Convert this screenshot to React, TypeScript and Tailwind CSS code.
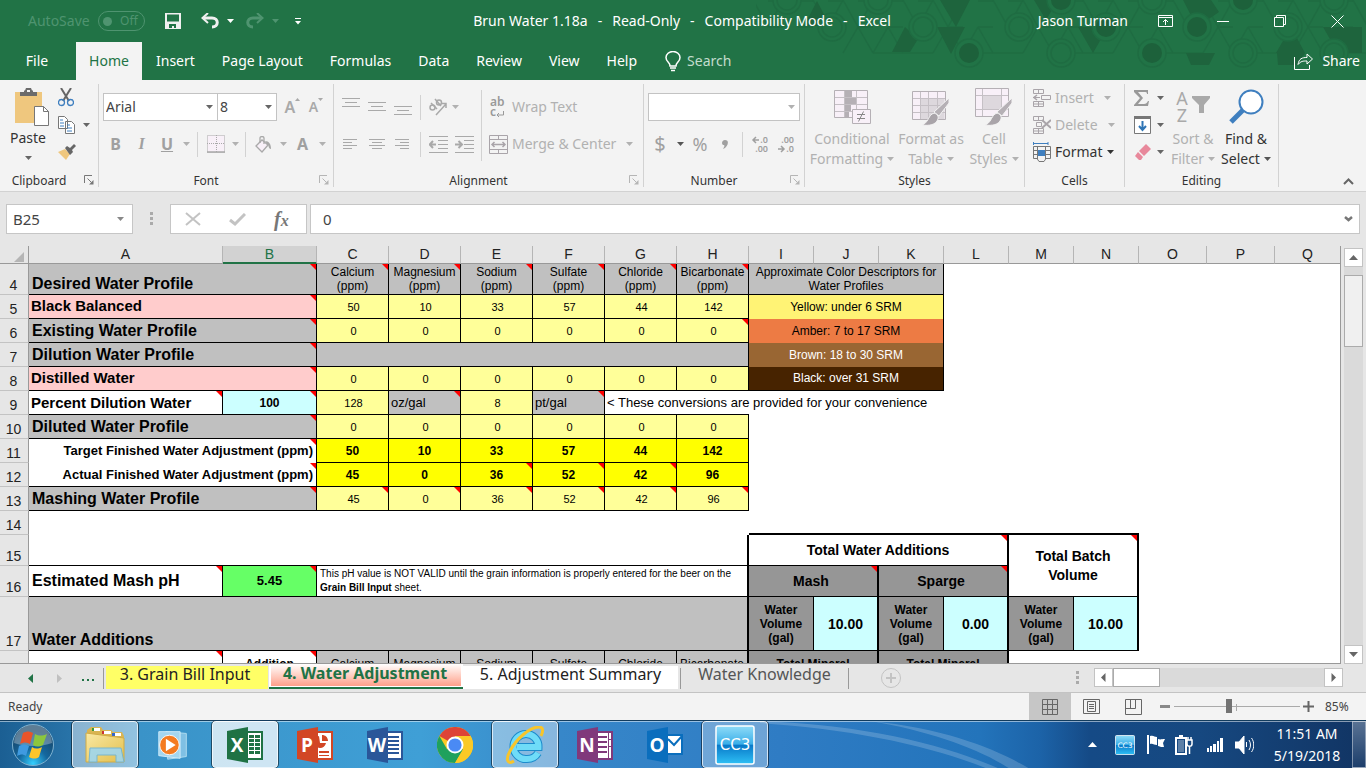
import React, { useState } from 'react';
import clsx from 'clsx';

const RIBBON_TABS = ['Insert', 'Page Layout', 'Formulas', 'Data', 'Review', 'View', 'Help'];
const COLUMNS = ['A', 'B', 'C', 'D', 'E', 'F', 'G', 'H', 'I', 'J', 'K', 'L', 'M', 'N', 'O', 'P', 'Q'];
const COLUMN_WIDTHS = [29, 194, 94, 72, 72, 72, 72, 72, 72, 65, 65, 65, 65, 65, 65, 68, 68];
const IONS = ['Calcium', 'Magnesium', 'Sodium', 'Sulfate', 'Chloride', 'Bicarbonate'];

/* ---------- small shared pieces ---------- */

const Caret = ({ className = 'text-[#666]' }: { className?: string }) => (
    <svg width="7" height="4" viewBox="0 0 7 4" className={clsx('shrink-0', className)}><path d="M0 0h7L3.500 4z" fill="currentColor" /></svg>
);

const Sep = ({ className = 'h-[25px]' }: { className?: string }) => <div className={clsx('w-px mx-1 shrink-0 bg-[#d2d2d2]', className)} />;

const IconButton = ({ label, className, children }: { label: string; className?: string; children: React.ReactNode }) => (
    <button type="button" aria-label={label} className={clsx('flex items-center justify-center shrink-0 h-6', className)}>{children}</button>
);

const Launcher = ({ className = 'text-[#b5b5b5]' }: { className?: string }) => (
    <svg width="10" height="10" viewBox="0 0 10 10" fill="none" stroke="currentColor" className={className}>
        <path d="M.5 8V.5H8M3.500 3.500l4 4" />
        <path d="M9.500 5v4.500H5z" fill="currentColor" stroke="none" />
    </svg>
);

const Group = ({ label, width, launcher, className, children }: { label: string; width: string; launcher?: string; className?: string; children: React.ReactNode }) => (
    <section aria-label={label} className={clsx('relative flex flex-col shrink-0 border-r border-[#d2d2d2] h-[103px]', width)}>
        <div className={clsx('flex shrink-0 h-[88px]', className)}>{children}</div>
        <div className={clsx('flex shrink-0 items-center justify-center h-[18px] text-xs text-[#333]', launcher && 'pr-5')}>{label}</div>
        {launcher && <button type="button" aria-label={`${label} settings`} className="absolute right-1 bottom-0.5"><Launcher className={launcher} /></button>}
    </section>
);

/* ---------- header ---------- */

// triangular lattice with circles on every third node
const HeaderPattern = () => {
    const lines: React.ReactNode[] = [];
    for (let i = 0; i < 22; i++) {
        const x = 12 + i * 30;
        if (i % 3 !== 1) lines.push(<path key={`a${i}`} d={`M${x} 27l15 -27M${x} 27l-15 -27`} />);
        if (i % 3 !== 2 && i > 1) lines.push(<path key={`b${i}`} d={`M${x} 27l15 26M${x} 27l-15 26`} />);
        if (i % 3 !== 0 && i > 2) lines.push(<path key={`c${i}`} d={`M${x - 15} 53h30`} />);
        lines.push(<path key={`d${i}`} d={`M${x} 27h15M${x} 1h15`} />);
    }
    const rings = [[31, 0], [76, 27], [122, 0], [167, 27], [263, 27], [305, 53], [487, 53], [396, 0], [532, 27], [578, 53], [578, 0]];
    const discs = [[213, 53], [305, 0], [350, 27], [396, 53], [441, 27], [487, 0]];
    return (
        <svg width="610" height="80" viewBox="0 0 610 80" className="absolute right-0 top-0" fill="none" stroke="#1f6c42" strokeWidth="1.500">
            {lines}
            <g fill="#1e643d" stroke="none">
                <path d="M61 1l13 25H48zM149 27l-13 25h18l8 -13zM181 27h28l-14 27zM184 0h30l-14 27zM322 27h30l-15 26zM278 0h24l-12 20zM427 0h28l8 12 -22 15zM520 53l15 -26 14 26zM567 27l15 26h24V27z" />
                <path d="M521 53h28l-7 12h-20zM430 53h29l-6 12h-18z" />
            </g>
            {rings.map(([x, y], i) => <g key={i}><circle cx={x} cy={y} r="14" fill="#217346" /><circle cx={x} cy={y} r="10" /></g>)}
            {discs.map(([x, y], i) => <g key={i}><circle cx={x} cy={y} r="14" fill="#217346" /><circle cx={x} cy={y} r="10" fill="#1d613b" stroke="none" /></g>)}
        </svg>
    );
};

const Header = () => (
    <header className="relative shrink-0 bg-[#217346] text-white text-sm">
        <HeaderPattern />
        <div className="relative flex items-center h-[42px]">
            <div className="flex items-center flex-1 pl-7 text-[#4f9470]">
                <span>AutoSave</span>
                <button type="button" aria-label="AutoSave off" className="flex items-center justify-between w-[47px] h-5 ml-2 pl-1 pr-1.5 border border-[#4f9470] rounded-full text-xs">
                    <span className="w-[9px] h-[9px] rounded-full bg-[#4f9470]" />Off
                </button>
                <button type="button" aria-label="Save" className="ml-5">
                    <svg width="16" height="16" viewBox="0 0 16 16"><path fill="#f0f0f0" fillRule="evenodd" d="M0 0h16v16H0zM2 1.500v7h12v-7zM4 11v4h3v-2h2v2h2v-4z" /></svg>
                </button>
                <button type="button" aria-label="Undo" className="flex items-center gap-2 ml-5 text-[#f0f0f0]">
                    <svg width="18" height="16" viewBox="0 0 18 16" fill="none" stroke="currentColor"><path d="M3 5h8c7 0 7 9 0 9" strokeWidth="3" /><path d="M7 0L1.500 5 7 10" strokeWidth="2" /></svg>
                    <Caret className="text-white" />
                </button>
                <button type="button" aria-label="Redo" className="flex items-center gap-2 ml-3">
                    <svg width="18" height="16" viewBox="0 0 18 16" fill="none" stroke="currentColor"><path d="M15 5H7c-7 0-7 9 0 9" strokeWidth="3" /><path d="M11 0l5.500 5L11 10" strokeWidth="2" /></svg>
                    <Caret className="text-[#4f9470]" />
                </button>
                <button type="button" aria-label="Customize toolbar" className="ml-4 text-white">
                    <svg width="6" height="7" viewBox="0 0 6 7" fill="currentColor"><path d="M0 0h6v1H0zM0 3h6L3 6.500z" /></svg>
                </button>
            </div>
            <h1 className="flex gap-2.5 pr-2 whitespace-nowrap shrink-0"><span>Brun Water 1.18a</span><span>-</span><span>Read-Only</span><span>-</span><span>Compatibility Mode</span><span>-</span><span>Excel</span></h1>
            <div className="flex items-center justify-end flex-1 pr-[22px]">
                <span>Jason Turman</span>
                <button type="button" aria-label="Ribbon display options" className="ml-[30px]">
                    <svg width="15" height="12" viewBox="0 0 15 12" fill="none" stroke="#fff"><path d="M.5 .5h14v11H.5zM.5 2.500h14M7.500 10V4.500M5 7l2.500-2.500L10 7" /></svg>
                </button>
                <button type="button" aria-label="Minimize" className="w-3 h-px ml-11 bg-white" />
                <button type="button" aria-label="Restore" className="ml-[45px]">
                    <svg width="12" height="12" viewBox="0 0 12 12" fill="none" stroke="#fff"><path d="M.5 2.500h9v9h-9zM2.500 2.500v-2h9v9h-2" /></svg>
                </button>
                <button type="button" aria-label="Close" className="ml-[45px]">
                    <svg width="13" height="13" viewBox="0 0 13 13" stroke="#fff"><path d="M.5 .5l12 12M12.500 .5l-12 12" /></svg>
                </button>
            </div>
        </div>
        <nav className="relative flex items-center gap-px h-[38px]">
            <button type="button" className="w-[74px]">File</button>
            <button type="button" className="self-stretch w-[66px] ml-px bg-[#f3f3f3] text-[#217346]">Home</button>
            {RIBBON_TABS.map(t => <button type="button" key={t} className="px-[13px]">{t}</button>)}
            <label className="flex items-center ml-3.5 gap-1.5 text-[#c3dccd]">
                <svg width="16" height="21" viewBox="0 0 16 21" fill="none" stroke="#fff" strokeWidth="1.500"><path d="M5 15c0-4-4-4-4-8.500a7 6 0 0 1 14 0C15 11 11 11 11 15zM5 17h6M6 19.500h4" /></svg>
                <input type="text" placeholder="Search" className="w-24 bg-transparent outline-none placeholder:text-[#c3dccd]" />
            </label>
            <button type="button" className="flex items-center gap-2 ml-auto pr-1.5">
                <svg width="21" height="18" viewBox="0 0 21 18" fill="none" stroke="#fff"><path d="M1.500 5v12.500h15V13M5 12.500c1-6 4-7 9-7V2l5.500 5L14 12V9c-4 0-6 0-9 3.500z" /></svg>
                Share
            </button>
        </nav>
    </header>
);

/* ---------- ribbon ---------- */

const ALIGN_ICONS: [string, number, string][] = [
    ['Top align', 0, 'M0 .5h18M3 4.500h12M0 8.500h18'],
    ['Middle align', 4, 'M0 .5h18M3 4.500h12M0 8.500h18'],
    ['Bottom align', 8, 'M0 .5h18M3 4.500h12M0 8.500h18'],
];

const TEXT_ALIGN_ICONS: [string, string][] = [
    ['Align left', 'M0 .5h14M0 3.500h9M0 6.500h14M0 9.500h9'],
    ['Center', 'M0 .5h16M3 3.500h10M0 6.500h16M3 9.500h10'],
    ['Align right', 'M0 .5h14M5 3.500h9M0 6.500h14M5 9.500h9'],
];

const Indent = ({ flip }: { flip?: boolean }) => (
    <svg width="19" height="17" viewBox="0 0 19 17" fill="none" stroke="#a9a9a9">
        <path d="M0 .5h19M9 4.500h10M9 8.500h10M9 12.500h10M0 16.500h19" />
        <path d={flip ? 'M0 8.500h6M3.500 5l3.500 3.500L3.500 12' : 'M7 8.500H1M4 5L.7 8.500 4 12'} strokeWidth="2" />
    </svg>
);

const Brush = () => (
    <g><path d="M37 10v5L27 28l-5-4z" fill="#b5b0b5" stroke="#f3f3f3" /><path d="M20 26c3-2 7 1 6 5-2 6-9 7-16 6 6-2 6-8 10-11z" fill="#a9a4a9" stroke="#f3f3f3" /></g>
);

const GridIcon = ({ shade }: { shade: string }) => (
    <svg width="38" height="38" viewBox="0 0 38 38">
        <path d="M.5 3.500h33v28H.5z" fill="#f8f0f8" stroke="#b5b0b5" />
        <path d={shade} fill="#ddd8dd" />
        <path d="M1 10.500h32M1 17.500h32M1 24.500h32M8.500 4v27M16.500 4v27M25.500 4v27" stroke="#c5c0c5" fill="none" />
        <Brush />
    </svg>
);

const CellStyleIcon = () => (
    <svg width="38" height="38" viewBox="0 0 38 38">
        <path d="M.5 .5h33v28H.5z" fill="#f8f0f8" stroke="#b5b0b5" />
        <path d="M8 8h18v13H8z" fill="#ddd8dd" />
        <path d="M1 7.500h32M1 21.500h32M7.500 1v27M26.500 1v27" stroke="#c5c0c5" fill="none" />
        <Brush />
    </svg>
);

const BigButton = ({ lines, width, disabled, icon }: { lines: [string, string]; width: string; disabled?: boolean; icon: React.ReactNode }) => (
    <button type="button" className={clsx('flex flex-col items-center shrink-0 text-sm leading-5', width, disabled ? 'text-[#b1b1b1]' : 'text-[#333]')}>
        <span className="flex items-center justify-center h-[45px]">{icon}</span>
        <span className="whitespace-nowrap">{lines[0]}</span>
        <span className="flex items-center gap-1 whitespace-nowrap">{lines[1]}<Caret className={disabled ? 'text-[#b1b1b1]' : 'text-[#555]'} /></span>
    </button>
);

const Ribbon = () => (
    <div className="flex shrink-0 h-28 pt-1 bg-[#f3f3f3] border-b border-[#d2d2d2] text-[#333]">
        <Group label="Clipboard" width="w-[99px]" launcher="text-[#777]" className="pl-2">
            <button type="button" className="flex flex-col items-center w-10 text-sm">
                <svg width="34" height="38" viewBox="0 0 34 38" className="mt-1 ml-2">
                    <path d="M0 4h27v31H0z" fill="#efc77e" />
                    <path d="M5 4h4V2.500h1L11 0h5l1 2.500h1V4h4v4H5z" fill="#6b6b6b" />
                    <path d="M12 2h3v2h-3z" fill="#f3f3f3" />
                    <path d="M19.500 18.500h9l5 5v14h-14z" fill="#fff" stroke="#777" />
                    <path d="M28.500 18.500v5h5" fill="none" stroke="#777" />
                </svg>
                <span className="mt-0.5 mb-2 leading-5">Paste</span>
                <Caret />
            </button>
            <div className="flex flex-col ml-1.5">
                <button type="button" aria-label="Cut" className="flex items-center w-6 h-[27px] pl-1">
                    <svg width="16" height="19" viewBox="0 0 16 19" fill="none"><path d="M3 0l8 13M13 0L5 13" stroke="#666" strokeWidth="2" /><circle cx="3.500" cy="14.500" r="3" stroke="#3f7fbf" strokeWidth="1.300" /><circle cx="12.500" cy="14.500" r="3" stroke="#3f7fbf" strokeWidth="1.300" /></svg>
                </button>
                <button type="button" aria-label="Copy" className="flex items-center w-9 h-[27px] pl-1 gap-2">
                    <svg width="17" height="18" viewBox="0 0 17 18" fill="#fff"><path d="M.5 .5h6l3 3v9h-9zM7.500 5.500h6l3 3v9h-9z" stroke="#777" /><path d="M2 4h3M2 7h4M2 10h4M9 9h3M9 12h5M9 15h5" stroke="#3f7fbf" /></svg>
                    <Caret />
                </button>
                <button type="button" aria-label="Format painter" className="flex items-center w-6 h-[27px] pl-1">
                    <svg width="18" height="16" viewBox="0 0 18 16"><path d="M0 8l7-3 5 5-4 6z" fill="#efc77e" /><path d="M7 4l2-2 3 2 4-4 2 2-4 4 1 2-3 3z" fill="#666" /></svg>
                </button>
            </div>
        </Group>

        <Group label="Font" width="w-[235px]" launcher="text-[#b5b5b5]" className="flex-col pl-1 pt-[9px]">
            <div className="flex items-center h-7 text-sm">
                <div className="flex items-center w-[115px] h-7 pl-0.5 pr-1 bg-white border border-[#c3c3c3]">
                    <input aria-label="Font name" defaultValue="Arial" className="flex-1 min-w-0 bg-transparent outline-none text-[#444]" /><Caret />
                </div>
                <div className="flex items-center w-[60px] h-7 pl-0.5 pr-1 -ml-px bg-white border border-[#c3c3c3]">
                    <input aria-label="Font size" defaultValue="8" className="flex-1 min-w-0 bg-transparent outline-none text-[#444]" /><Caret />
                </div>
                <IconButton label="Increase font size" className="w-[27px] text-base text-[#a9a9a9] font-semibold">
                    <span className="ml-1">A</span>
                    <svg width="5" height="3" viewBox="0 0 5 3" fill="currentColor" className="mb-4"><path d="M0 3h5L2.500 0z" /></svg>
                </IconButton>
                <IconButton label="Decrease font size" className="w-6 text-sm text-[#a9a9a9] font-semibold">A
                    <svg width="5" height="3" viewBox="0 0 5 3" fill="currentColor" className="mb-4"><path d="M0 0h5L2.500 3z" /></svg>
                </IconButton>
            </div>
            <div className="flex items-center h-6 mt-[11px] pr-1 text-base text-[#a0a0a0]">
                <IconButton label="Bold" className="w-[25px] font-bold">B</IconButton>
                <IconButton label="Italic" className="w-[27px] font-bold italic font-['Liberation_Serif',serif]">I</IconButton>
                <IconButton label="Underline" className="w-6 font-bold underline">U</IconButton>
                <IconButton label="Underline options" className="w-[14px]"><Caret className="text-[#b1b1b1]" /></IconButton>
                <Sep />
                <IconButton label="Borders" className="w-[27px]">
                    <svg width="18" height="18" viewBox="0 0 18 18" fill="#f8f0f8" stroke="#a9a9a9"><path d="M.5 .5h17v17H.5zM9.500 0v17M0 8.500h17" strokeDasharray="1 1" /><path d="M0 17h18" strokeWidth="1.500" /></svg>
                </IconButton>
                <IconButton label="Border options" className="w-3"><Caret className="text-[#b1b1b1]" /></IconButton>
                <Sep />
                <IconButton label="Fill color" className="w-[27px]">
                    <svg width="17" height="17" viewBox="0 0 17 17" fill="#f8f0f8" stroke="#a9a9a9" strokeWidth="1.300"><path d="M1 10l6-6 6 5-6 7z" /><path d="M5 7V2c0-2 4-2 4 0v6" fill="none" /><path d="M10 5c4 0 6 3 6 8-3 0-2-5-4-5z" fill="#a9a9a9" stroke="none" /></svg>
                </IconButton>
                <IconButton label="Fill color options" className="w-3"><Caret className="text-[#b1b1b1]" /></IconButton>
                <IconButton label="Font color" className="w-[27px] font-bold">A</IconButton>
                <IconButton label="Font color options" className="w-3"><Caret className="text-[#b1b1b1]" /></IconButton>
            </div>
        </Group>

        <Group label="Alignment" width="w-[310px]" launcher="text-[#b5b5b5]" className="pl-1">
            <div className="pt-[9px]">
                <div className="flex items-center h-7">
                    {ALIGN_ICONS.map(([label, y, d]) => (
                        <IconButton key={label} label={label} className="w-[26px]">
                            <svg width="18" height="18" viewBox="0 0 18 18" stroke="#a9a9a9"><path d={d} transform={`translate(0 ${y})`} /></svg>
                        </IconButton>
                    ))}
                    <Sep />
                    <IconButton label="Orientation" className="w-[26px]">
                        <svg width="20" height="18" viewBox="0 0 20 18" fill="none" stroke="#a9a9a9" strokeWidth="1.500"><circle cx="4.500" cy="9.500" r="2.500" /><path d="M3 5l6 6M7 1l6 7M8 17L18 6M13.500 5.500H18V10" /><circle cx="11" cy="4.500" r="2.500" /></svg>
                    </IconButton>
                    <Caret className="text-[#b1b1b1] ml-px" />
                </div>
                <div className="flex items-center h-6 mt-[11px]">
                    {TEXT_ALIGN_ICONS.map(([label, d]) => (
                        <IconButton key={label} label={label} className="w-[26px]"><svg width="16" height="10" viewBox="0 0 16 10" stroke="#a9a9a9"><path d={d} /></svg></IconButton>
                    ))}
                    <Sep />
                    <IconButton label="Decrease indent" className="w-[26px]"><Indent /></IconButton>
                    <IconButton label="Increase indent" className="w-[26px]"><Indent flip /></IconButton>
                </div>
            </div>
            <Sep className="h-[71px] mt-1.5" />
            <div className="pt-[9px] text-sm text-[#b1b1b1]">
                <button type="button" className="flex items-center h-7 text-left">
                    <span className="flex flex-col w-[26px] pl-1 text-xs font-semibold text-[#999]">
                        <span className="leading-[10px]">ab</span>
                        <span className="flex items-center leading-[10px]">c<svg width="8" height="7" viewBox="0 0 8 7" fill="none" stroke="currentColor" className="mt-1"><path d="M7.500 0v4H1M3 2L1 4l2 2" /></svg></span>
                    </span>
                    Wrap Text
                </button>
                <button type="button" className="flex items-center h-6 mt-[11px]">
                    <svg width="19" height="19" viewBox="0 0 19 19" fill="none" stroke="#a9a4a9" className="ml-[3px] mr-1"><path d="M.5 .5h18v18H.5zM9.500 0v5M9.500 14v5M0 4.500h19M0 14.500h19" /><path d="M3 9.500h13M5.500 7L3 9.500 5.500 12M13.500 7L16 9.500 13.500 12" strokeWidth="1.500" /></svg>
                    Merge &amp; Center<Caret className="ml-2.5 text-[#b1b1b1]" />
                </button>
            </div>
        </Group>

        <Group label="Number" width="w-[161px]" launcher="text-[#b5b5b5]" className="flex-col pl-1 pt-[9px]">
            <div className="flex items-center w-[152px] h-7 px-1 bg-white border border-[#c3c3c3]">
                <input aria-label="Number format" className="flex-1 min-w-0 bg-transparent outline-none text-sm" /><Caret className="text-[#b1b1b1]" />
            </div>
            <div className="flex items-center h-6 mt-[11px] text-[#a0a0a0] text-xl">
                <IconButton label="Currency" className="w-6">$</IconButton>
                <IconButton label="Currency options" className="w-4"><Caret className="text-[#555]" /></IconButton>
                <IconButton label="Percent" className="w-6 text-lg">%</IconButton>
                <IconButton label="Comma style" className="w-[26px]">
                    <svg width="6" height="9" viewBox="0 0 6 9" fill="currentColor"><path d="M3 0c5 0 3 7-2 9 1-2 2-3 1-4C-1 5-.5 0 3 0z" /></svg>
                </IconButton>
                <Sep />
                <IconButton label="Increase decimal" className="w-[26px]">
                    <svg width="20" height="24" viewBox="-2 -4 20 24"><path d="M7 4H1M4 1L1 4l3 3" fill="none" stroke="#a0a0a0" strokeWidth="1.500" /><text x="16" y="7" textAnchor="end" fontSize="9" fontWeight="600" fill="#a0a0a0">.0</text><text x="16" y="16" textAnchor="end" fontSize="9" fontWeight="600" fill="#a0a0a0">.00</text></svg>
                </IconButton>
                <IconButton label="Decrease decimal" className="w-[26px]">
                    <svg width="20" height="24" viewBox="-2 -4 20 24"><path d="M0 13h6M3 10l3 3-3 3" fill="none" stroke="#a0a0a0" strokeWidth="1.500" /><text x="16" y="7" textAnchor="end" fontSize="9" fontWeight="600" fill="#a0a0a0">.00</text><text x="16" y="16" textAnchor="end" fontSize="9" fontWeight="600" fill="#a0a0a0">.0</text></svg>
                </IconButton>
            </div>
        </Group>

        <Group label="Styles" width="w-[220px]" className="pl-[5px]">
            <BigButton width="w-[84px]" disabled lines={['Conditional', 'Formatting']} icon={
                <svg width="37" height="34" viewBox="0 0 37 34">
                    <path d="M.5 .5h33v27H.5z" fill="#f8f0f8" stroke="#b5b0b5" />
                    <path d="M11 1h7v6h4v7h-5v7h-2v7h-4z" fill="#b5b0b5" />
                    <path d="M1 7.500h32M1 14.500h32M1 21.500h32M10.500 1v26M22.500 1v26" stroke="#c5c0c5" />
                    <path d="M18.500 19.500h18v14h-18z" fill="#f8f0f8" stroke="#b5b0b5" />
                    <path d="M23 24.500h8M23 28.500h8M29.500 21.500l-5 10" stroke="#888" />
                </svg>} />
            <BigButton width="w-[74px]" disabled lines={['Format as', 'Table']} icon={<GridIcon shade="M8.500 10h24v21h-24z" />} />
            <BigButton width="w-[52px]" disabled lines={['Cell', 'Styles']} icon={<CellStyleIcon />} />
        </Group>

        <Group label="Cells" width="w-[100px]" className="flex-col pl-2 text-sm">
            <button type="button" className="flex items-center h-[27px] text-[#b1b1b1]">
                <svg width="18" height="18" viewBox="0 0 18 18" fill="none" stroke="#a9a4a9" className="mr-1"><path d="M.5 .5h10v4H.5zM5.500 0v4M8.500 6.500h9v4h-9zM.5 12.500h10v5H.5zM5.500 12v5M0 15h10M0 8.500h7" /><path d="M4 6L1 8.500 4 11" strokeWidth="1.500" /></svg>
                Insert<Caret className="ml-2.5" />
            </button>
            <button type="button" className="flex items-center h-[27px] text-[#b1b1b1]">
                <svg width="18" height="18" viewBox="0 0 18 18" fill="none" stroke="#a9a4a9" className="mr-1"><path d="M.5 .5h10v4H.5zM5.500 0v4M3.500 6.500h5v4h-5zM.5 12.500h10v5H.5zM5.500 12v5M0 15h10" /><path d="M9 4l9 8M18 4l-9 8" strokeWidth="2" /></svg>
                Delete<Caret className="ml-2.5" />
            </button>
            <button type="button" className="flex items-center h-[27px]">
                <svg width="18" height="20" viewBox="0 0 18 20" fill="none" className="mr-1"><path d="M.5 4.500h17v12H13l-2 3H6l-2-3H.5zM0 8.500h18M0 12.500h18M4.500 5v12M12.500 5v12" stroke="#777" /><path d="M5 8h7v6H5z" fill="#3f7fbf" /><path d="M1 1.500h14M.5 0v3M15 0v3" stroke="#3f7fbf" /></svg>
                Format<Caret className="ml-1" />
            </button>
        </Group>

        <Group label="Editing" width="w-[154px]" className="pl-1.5">
            <div className="flex flex-col w-9">
                <IconButton label="AutoSum" className="h-[27px] w-9 gap-2"><svg width="15" height="16" viewBox="0 0 15 16" fill="#999"><path d="M0 0h14v4h-1c0-2-1-2-3-2H4l5 6-5 6h6c2 0 3-1 4-3h1l-1 5H0v-1l6-7-6-6z" /></svg><Caret /></IconButton>
                <IconButton label="Fill" className="h-[27px] w-9 gap-1.5"><svg width="17" height="18" viewBox="0 0 17 18"><path d="M.5 .5h16v17H.5z" fill="#fff" stroke="#777" /><path d="M0 0h17v3H0z" fill="#777" /><path d="M8.500 5v9M5 10l3.500 4L12 10" stroke="#2f75b5" strokeWidth="2" fill="none" /></svg><Caret /></IconButton>
                <IconButton label="Clear" className="h-[27px] w-9 gap-1.5"><svg width="16" height="16" viewBox="0 0 16 16"><path d="M4 7l7-7 5 5-7 7z" fill="#e8889b" /><path d="M3 8l5 5-2 3H4L0 12z" fill="#e8889b" /></svg><Caret /></IconButton>
            </div>
            <BigButton width="w-[52px]" disabled lines={['Sort &', 'Filter']} icon={
                <span className="flex items-center text-[#a9a9a9] text-lg leading-[17px]"><span>A<br />Z</span><svg width="18" height="18" viewBox="0 0 18 18" className="ml-1 mb-1" fill="#a9a9a9"><path d="M0 0h18v2l-6 7v8H7V9L0 2z" /></svg></span>} />
            <BigButton width="w-[54px]" lines={['Find &', 'Select']} icon={
                <svg width="35" height="35" viewBox="0 0 35 35"><path d="M2 33l12-12" stroke="#3f7fbf" strokeWidth="5" /><circle cx="22" cy="13" r="11.500" fill="#fff" stroke="#3f7fbf" strokeWidth="2" /></svg>} />
        </Group>
        <button type="button" aria-label="Collapse the ribbon" className="self-end mb-1.5 ml-auto mr-3">
            <svg width="11" height="7" viewBox="0 0 11 7" fill="none" stroke="#666" strokeWidth="2"><path d="M1 6l4.500-4.500L10 6" /></svg>
        </button>
    </div>
);

const FormulaBar = () => (
    <div className="flex items-start shrink-0 h-[54px] pt-3 pl-1.5 pr-1.5 bg-[#e6e6e6] text-[15px] text-[#444]">
        <div className="flex items-center w-[127px] h-[30px] pl-1.5 pr-2 bg-white border border-[#c6c6c6]">
            <input aria-label="Name box" defaultValue="B25" className="flex-1 min-w-0 outline-none" /><Caret className="text-[#888]" />
        </div>
        <svg width="3" height="13" viewBox="0 0 3 13" fill="#aaa" className="mx-[17px] mt-2"><path d="M0 0h3v3H0zM0 5h3v3H0zM0 10h3v3H0z" /></svg>
        <div className="flex items-center w-[137px] h-[30px] px-3.5 gap-7 bg-white border border-[#c6c6c6]">
            <button type="button" aria-label="Cancel"><svg width="16" height="14" viewBox="0 0 16 14" stroke="#c3c3c3" strokeWidth="2"><path d="M1 1l14 12M15 1L1 13" /></svg></button>
            <button type="button" aria-label="Enter"><svg width="17" height="13" viewBox="0 0 17 13" stroke="#c3c3c3" strokeWidth="3" fill="none"><path d="M1 7l5 4L16 1" /></svg></button>
            <button type="button" aria-label="Insert function" className="text-xl font-bold italic text-[#777] font-['Liberation_Serif',serif]">f<span className="text-base">x</span></button>
        </div>
        <div className="flex items-center flex-1 h-[30px] ml-[3px] pl-3 pr-1.5 bg-white border border-[#c6c6c6]">
            <input aria-label="Formula bar" defaultValue="0" className="flex-1 outline-none" />
            <svg width="9" height="6" viewBox="0 0 9 6" fill="none" stroke="#777" strokeWidth="2.500"><path d="M1 1l3.500 3L8 1" /></svg>
        </div>
    </div>
);

/* ---------- worksheet ---------- */

interface CellProps {
    className?: string;
    span?: number;
    rows?: number;
    note?: boolean;
    children?: React.ReactNode;
}

const Cell = ({ className = '', span, rows, note, children }: CellProps) => (
    <td colSpan={span} rowSpan={rows} className={clsx('relative p-0 border-black', className)}>
        {children}
        {note && <span className="absolute top-0 right-0 border-t-[6px] border-l-[6px] border-t-[#ff0000] border-l-transparent" />}
    </td>
);

const Row = ({ n, height, children }: { n: number; height: string; children?: React.ReactNode }) => (
    <tr className={height}>
        <th scope="row" className="p-0 pr-px bg-[#e6e6e6] border-r border-b border-r-[#999] border-b-[#c3c3c3] text-sm leading-[18px] font-normal align-bottom text-[#222]">{n}</th>
        {children}
    </tr>
);

const BOX = 'border-r border-b';
const HEADING = 'border-r border-b bg-[#c0c0c0] pl-[3px] text-base leading-5 font-bold';
const PICK = 'border-r border-b bg-[#ffcccc] pl-0.5 pb-px text-[15px] leading-5 font-bold';
const ION = 'border-r border-b bg-[#c0c0c0] text-center text-xs leading-[14px]';
const PALE = 'border-r border-b bg-[#ffff99] pl-0.5 text-center text-[11px] leading-4';
const BRIGHT = 'border-r border-b bg-[#ffff00] text-center text-xs leading-4 font-bold';
const VOLUME = 'border-r border-b bg-[#969696] text-center text-xs leading-[14px] font-bold';
const CYAN = 'border-r-2 border-b bg-[#ccffff] text-center text-sm leading-5 font-bold';
const COLOR = 'border-r pb-px text-center text-xs';
const LAST = 'pt-1.5 align-top text-center text-xs leading-[14px]';

const Numbers = ({ values, style, notes = '' }: { values: number[]; style: string; notes?: string }) => (
    <>{values.map((v, i) => <Cell key={i} className={style} note={notes.includes('CDEFGH'[i])}>{v}</Cell>)}</>
);

const ZEROS = [0, 0, 0, 0, 0, 0];

const Sheet = () => (
    <div className="flex-1 min-w-0 overflow-hidden bg-white border-r border-b border-[#999]">
        <table className="w-full table-fixed border-separate border-spacing-0 font-['Liberation_Sans',Arial,sans-serif] text-black">
            <colgroup>
                {COLUMN_WIDTHS.map((w, i) => <col key={i} style={{ width: w }} />)}
                <col />
            </colgroup>
            <thead>
                <tr className="h-[18px]">
                    <th className="p-0 bg-[#e6e6e6] border-r border-b border-[#999]">
                        <svg width="10" height="10" viewBox="0 0 10 10" className="ml-auto mr-1 mt-1"><path d="M10 0v10H0z" fill="#b5b5b5" /></svg>
                    </th>
                    {COLUMNS.map(c => (
                        <th key={c} scope="col" className={clsx('p-0 text-sm leading-[15px] font-normal border-r border-r-[#b5b5b5] last:border-r-0', c === 'B' ? 'bg-[#d2d2d2] border-b-2 border-b-[#217346] text-[#217346]' : 'bg-[#e6e6e6] border-b border-b-[#999] text-[#222]')}>{c}</th>
                    ))}
                </tr>
            </thead>
            <tbody>
                <Row n={4} height="h-[31px]">
                    <Cell span={2} note className={clsx(HEADING, 'align-bottom')}>Desired Water Profile</Cell>
                    {IONS.map(ion => <Cell key={ion} note className={ION}>{ion}<br />(ppm)</Cell>)}
                    <Cell span={3} className={ION}>Approximate Color Descriptors for<br />Water Profiles</Cell>
                </Row>
                <Row n={5} height="h-6">
                    <Cell span={2} note className={PICK}>Black Balanced</Cell>
                    <Numbers values={[50, 10, 33, 57, 44, 142]} style={PALE} />
                    <Cell span={3} className={clsx(COLOR, 'bg-[#fff375]')}>Yellow: under 6 SRM</Cell>
                </Row>
                <Row n={6} height="h-6">
                    <Cell span={2} note className={HEADING}>Existing Water Profile</Cell>
                    <Numbers values={ZEROS} style={PALE} notes="H" />
                    <Cell span={3} className={clsx(COLOR, 'bg-[#ed7b44]')}>Amber: 7 to 17 SRM</Cell>
                </Row>
                <Row n={7} height="h-6">
                    <Cell span={2} note className={HEADING}>Dilution Water Profile</Cell>
                    <Cell span={6} className="border-r border-b bg-[#c0c0c0]" />
                    <Cell span={3} className={clsx(COLOR, 'bg-[#996633] text-white')}>Brown: 18 to 30 SRM</Cell>
                </Row>
                <Row n={8} height="h-6">
                    <Cell span={2} note className={PICK}>Distilled Water</Cell>
                    <Numbers values={ZEROS} style={PALE} />
                    <Cell span={3} className={clsx(COLOR, 'border-b bg-[#472300] text-white')}>Black: over 31 SRM</Cell>
                </Row>
                <Row n={9} height="h-6">
                    <Cell note className={clsx(BOX, 'pl-0.5 text-[15px] leading-5 font-bold whitespace-nowrap')}>Percent Dilution Water</Cell>
                    <Cell note className={clsx(BOX, 'bg-[#ccffff] text-center text-xs font-bold')}>100</Cell>
                    <Cell className={PALE}>128</Cell>
                    <Cell note className={clsx(BOX, 'bg-[#c0c0c0] pl-0.5 text-[13px] leading-5')}>oz/gal</Cell>
                    <Cell className={PALE}>8</Cell>
                    <Cell note className={clsx(BOX, 'bg-[#c0c0c0] pl-0.5 text-[13px] leading-5')}>pt/gal</Cell>
                    <Cell span={2} className="border-b pl-0.5 text-[13px] leading-5 whitespace-nowrap">&lt; These conversions are provided for your convenience</Cell>
                </Row>
                <Row n={10} height="h-6">
                    <Cell span={2} note className={HEADING}>Diluted Water Profile</Cell>
                    <Numbers values={ZEROS} style={PALE} />
                </Row>
                <Row n={11} height="h-6">
                    <Cell span={2} note className="border-r pr-[3px] text-right text-[13px] leading-5 font-bold">Target Finished Water Adjustment (ppm)</Cell>
                    <Numbers values={[50, 10, 33, 57, 44, 142]} style={BRIGHT} />
                </Row>
                <Row n={12} height="h-6">
                    <Cell span={2} note className="border-r border-b pr-[3px] text-right text-[13px] leading-5 font-bold">Actual Finished Water Adjustment (ppm)</Cell>
                    <Numbers values={[45, 0, 36, 52, 42, 96]} style={BRIGHT} notes="EFG" />
                </Row>
                <Row n={13} height="h-6">
                    <Cell span={2} note className={HEADING}>Mashing Water Profile</Cell>
                    <Numbers values={[45, 0, 36, 52, 42, 96]} style={PALE} notes="CDEFGH" />
                </Row>
                <Row n={14} height="h-6">
                    <Cell span={8} />
                    <Cell span={6} className="border-b-2" />
                </Row>
                <Row n={15} height="h-[31px]">
                    <Cell span={8} className="border-b border-r-2" />
                    <Cell span={4} note className="border-b border-r-2 text-center text-sm font-bold">Total Water Additions</Cell>
                    <Cell span={2} rows={2} note className="border-b border-r-2 text-center text-sm leading-[19px] font-bold">Total Batch<br />Volume</Cell>
                </Row>
                <Row n={16} height="h-[31px]">
                    <Cell note className={clsx(BOX, 'pl-[3px] text-base leading-5 font-bold')}>Estimated Mash pH</Cell>
                    <Cell note className={clsx(BOX, 'bg-[#66ff66] text-center text-[13px] leading-5 font-bold')}>5.45</Cell>
                    <Cell span={6} className="border-b border-r-2 pl-[3px] text-[10px] leading-[14px] whitespace-nowrap">This pH value is NOT VALID until the grain information is properly entered for the beer on the<br /><b>Grain Bill Input</b> sheet.</Cell>
                    <Cell span={2} note className="border-b border-r-2 bg-[#969696] pr-1 text-center text-sm font-bold">Mash</Cell>
                    <Cell span={2} note className="border-b border-r-2 bg-[#969696] pr-1 text-center text-sm font-bold">Sparge</Cell>
                </Row>
                <Row n={17} height="h-[54px]">
                    <Cell span={8} className="border-b border-r-2 bg-[#c0c0c0] pl-[3px] text-base leading-5 font-bold align-bottom">Water Additions</Cell>
                    {['10.00', '0.00', '10.00'].map((v, i) => (
                        <React.Fragment key={i}>
                            <Cell className={VOLUME}>Water<br />Volume<br />(gal)</Cell>
                            <Cell className={CYAN}>{v}</Cell>
                        </React.Fragment>
                    ))}
                </Row>
                <Row n={18} height="h-[34px]">
                    <Cell note className={BOX} />
                    <Cell note className={clsx(BOX, LAST, 'font-bold')}>Addition</Cell>
                    {IONS.map((ion, i) => <Cell key={ion} className={clsx('border-b bg-[#c0c0c0]', LAST, i === 5 ? 'border-r-2' : 'border-r')}>{ion}</Cell>)}
                    <Cell span={2} className={clsx('border-r-2 bg-[#969696] font-bold', LAST)}>Total Mineral</Cell>
                    <Cell span={2} className={clsx('border-r-2 bg-[#969696] font-bold', LAST)}>Total Mineral</Cell>
                </Row>
            </tbody>
        </table>
    </div>
);

const ScrollButton = ({ label, d }: { label: string; d: string }) => (
    <button type="button" aria-label={label} className="flex items-center justify-center w-[19px] h-[19px] shrink-0 bg-white border border-[#c3c3c3]">
        <svg width="9" height="9" viewBox="0 0 9 9" fill="#666"><path d={d} /></svg>
    </button>
);

const SheetTabs = () => {
    const [active, setActive] = useState('4. Water Adjustment');
    const tab = (name: string, cls: string) => (
        <button type="button" onClick={() => setActive(name)} aria-current={active === name} className={clsx('shrink-0 whitespace-nowrap leading-4', cls)}>{name}</button>
    );
    return (
        <div className="flex items-start shrink-0 h-7 bg-[#e6e6e6] text-base">
            <div className="flex items-center h-7 pl-7 text-[#217346]">
                <button type="button" aria-label="Previous sheet"><svg width="5" height="9" viewBox="0 0 5 9" fill="currentColor"><path d="M5 0v9L0 4.500z" /></svg></button>
                <button type="button" aria-label="Next sheet" className="ml-6 text-[#c0c0c0]"><svg width="5" height="9" viewBox="0 0 5 9" fill="currentColor"><path d="M0 0v9l5-4.500z" /></svg></button>
                <button type="button" aria-label="More sheets" className="mt-1 ml-5"><svg width="12" height="2" viewBox="0 0 12 2" fill="currentColor"><path d="M0 0h2v2H0zM5 0h2v2H5zM10 0h2v2h-2z" /></svg></button>
            </div>
            <div className="w-px h-[21px] mt-1 ml-[9px] bg-[#999]" />
            {tab('3. Grain Bill Input', 'w-[162px] h-[23px] mt-0.5 ml-0.5 pb-2 pr-1 bg-[#ffff66] text-[#222]')}
            <div className="h-[25px] ml-px bg-white border-b-2 border-[#217346] px-0.5 pb-px">
                {tab('4. Water Adjustment', 'block w-[190px] h-[22px] pb-1 pr-0.5 bg-linear-to-b from-white to-[#ff9f8a] font-bold text-[#217346]')}
            </div>
            {tab('5. Adjustment Summary', 'w-[215px] h-[23px] mt-0.5 pb-2 bg-white text-[#222]')}
            <div className="w-px h-[21px] mt-1 ml-0.5 bg-[#999]" />
            {tab('Water Knowledge', 'w-[167px] h-[23px] mt-0.5 pb-2 text-[#555]')}
            <div className="w-px h-[21px] mt-1 bg-[#999]" />
            <button type="button" aria-label="New sheet" className="mt-1 ml-8">
                <svg width="20" height="20" viewBox="0 0 20 20" fill="none" stroke="#c3c3c3"><circle cx="10" cy="10" r="9.500" /><path d="M10 5v10M5 10h10" strokeWidth="2" /></svg>
            </button>
            <svg width="3" height="13" viewBox="0 0 3 13" fill="#aaa" className="ml-auto mt-[7px] mr-[15px]"><path d="M0 0h3v3H0zM0 5h3v3H0zM0 10h3v3H0z" /></svg>
            <div className="flex w-[249px] h-[19px] mt-1 mr-[23px] bg-[#dadada]">
                <ScrollButton label="Scroll left" d="M6.500 0v9L2 4.500z" />
                <div className="w-[47px] bg-white border border-[#ababab] mr-auto" />
                <ScrollButton label="Scroll right" d="M2.500 0v9L7 4.500z" />
            </div>
        </div>
    );
};

const StatusBar = () => (
    <footer className="flex items-center shrink-0 h-7 pl-2 border-t border-[#c3c3c3] bg-[#f3f3f3] text-xs text-[#444]">
        <span className="mr-auto">Ready</span>
        <IconButton label="Normal view" className="w-[42px] h-[27px] bg-[#c6c6c6]"><svg width="16" height="16" viewBox="0 0 16 16" fill="none" stroke="#666"><path d="M.5 .5h15v15H.5zM5.500 0v16M10.500 0v16M0 5.500h16M0 10.500h16" /></svg></IconButton>
        <IconButton label="Page layout view" className="w-[41px] h-[27px]"><svg width="17" height="15" viewBox="0 0 17 15" fill="none" stroke="#666"><path d="M.5 .5h16v14H.5zM4.500 2.500h8v10h-8zM6 5.500h5M6 7.500h5M6 9.500h5" /></svg></IconButton>
        <IconButton label="Page break view" className="w-[42px] h-[27px]"><svg width="17" height="16" viewBox="0 0 17 16" fill="none" stroke="#666"><path d="M.5 .5h16v15H.5zM0 9.500h10.500V0M5.500 0v9" /></svg></IconButton>
        <button type="button" aria-label="Zoom out" className="w-2.5 h-[3px] ml-1.5 bg-[#888]" />
        <div className="relative flex items-center w-[126px] h-5 ml-1">
            <div className="absolute left-[62px] top-[7px] w-px h-[7px] bg-[#aaa]" />
            <input type="range" aria-label="Zoom" min={0} max={100} defaultValue={43} className="relative w-full h-5 appearance-none bg-transparent [&::-webkit-slider-runnable-track]:h-px [&::-webkit-slider-runnable-track]:bg-[#aaa] [&::-webkit-slider-thumb]:appearance-none [&::-webkit-slider-thumb]:w-1.5 [&::-webkit-slider-thumb]:h-3.5 [&::-webkit-slider-thumb]:-mt-[7px] [&::-webkit-slider-thumb]:bg-[#737373]" />
        </div>
        <button type="button" aria-label="Zoom in" className="ml-[3px]"><svg width="11" height="11" viewBox="0 0 11 11" stroke="#666" strokeWidth="2"><path d="M5.500 0v11M0 5.500h11" /></svg></button>
        <span className="w-[52px] pl-[11px]">85%</span>
    </footer>
);

/* ---------- taskbar ---------- */

const OfficeIcon = ({ letter, color, children }: { letter: string; color: string; children: React.ReactNode }) => (
    <svg width="36" height="36" viewBox="0 0 36 36">
        <path d="M19 4h17v29H19z" fill={color} />
        <path d="M21 6h13v25H21z" fill="#fff" />
        {children}
        <path d="M0 4l21-4v36L0 32z" fill={color} />
        <text x="10" y="25" textAnchor="middle" fontSize="19" fontWeight="700" fill="#fff" fontFamily="'Open Sans', sans-serif">{letter}</text>
    </svg>
);

const Cc3 = ({ size }: { size: number }) => (
    <svg width={size} height={size} viewBox="0 0 40 40">
        <defs><linearGradient id="cc3" x1="0" y1="0" x2="0" y2="1"><stop offset="0" stopColor="#8fdcf8" /><stop offset=".48" stopColor="#3aaee8" /><stop offset=".5" stopColor="#0878c8" /><stop offset="1" stopColor="#2fc0f5" /></linearGradient></defs>
        <rect x="1" y="1" width="38" height="38" rx="2" fill="url(#cc3)" stroke="#fff" strokeWidth="1.500" />
        <text x="20" y="25" textAnchor="middle" fontSize="15" fill="#fff" fontFamily="'DejaVu Sans', sans-serif">CC3</text>
    </svg>
);

const FolderIcon = () => (
    <svg width="40" height="38" viewBox="0 0 40 38">
        <defs><linearGradient id="folder" x1="0" y1="0" x2="1" y2="1"><stop offset="0" stopColor="#f9e9a4" /><stop offset="1" stopColor="#e3bf4d" /></linearGradient></defs>
        <path d="M2 4l4-3h10l2 3h8l2 2h9l2 4v24l-36-2z" fill="#d9b552" />
        <path d="M7 2h8v3H7zM17 5h9v3h-9zM27 7h9v3h-9z" fill="#fff" /><path d="M7 2h2v3H7z" fill="#3a9a3a" /><path d="M17 5h2v3h-2z" fill="#c33" /><path d="M27 7h3v3h-3z" fill="#36c" />
        <path d="M1 7l23 3 15 2v24H1z" fill="url(#folder)" stroke="#d0ab45" />
        <path d="M5 22h31l3 14h-8v-7H12v7H4z" fill="#9fd6ee" stroke="#6fb4d6" opacity=".9" />
    </svg>
);

const StartOrb = () => (
    <svg width="44" height="44" viewBox="0 0 44 44">
        <defs><radialGradient id="orb" cx=".5" cy=".95" r=".8"><stop offset="0" stopColor="#35d0ff" /><stop offset=".45" stopColor="#14689f" /><stop offset="1" stopColor="#174568" /></radialGradient></defs>
        <circle cx="22" cy="22" r="20.500" fill="url(#orb)" stroke="#7fb2d0" />
        <path d="M3 20a19 18 0 0 1 38 0c-10 4-28 4-38 0z" fill="#fff" opacity=".3" />
        <path d="M12 10c4-2 7-2 10 0l-3 11c-3-2-6-2-10 0z" fill="#e8542a" /><path d="M24 11c4 2 7 2 12 0l-4 11c-4 2-7 2-10 0z" fill="#8cc63e" />
        <path d="M8 23c4-2 7-2 10 0l-3 10c-3-2-5-2-9 0z" fill="#3f9ae0" /><path d="M21 24c3 2 6 2 10 0l-3 10c-3 2-6 2-10 0z" fill="#fbc52c" />
    </svg>
);

const ChromeIcon = () => (
    <svg width="36" height="36" viewBox="0 0 36 36">
        <circle cx="18" cy="18" r="18" fill="#fbc926" />
        <path d="M18 18L2.400 9A18 18 0 0 1 33.600 9H18z" fill="#dd4437" />
        <path d="M18 18L10.200 22.500 2.400 9a18 18 0 0 0 15.600 27l8-13.500z" fill="#1fa15d" />
        <path d="M18 9h15.600A18 18 0 0 1 18 36l8-13.500z" fill="#fbc926" />
        <circle cx="18" cy="18" r="8.500" fill="#fff" /><circle cx="18" cy="18" r="6.600" fill="#4a8af4" />
    </svg>
);

const IeIcon = () => (
    <svg width="40" height="38" viewBox="0 0 40 38" fill="none">
        <path d="M33 27c-3 5-7 6-11 6A12.500 12.500 0 1 1 33.500 21H12" stroke="#1d8ccc" strokeWidth="8" />
        <path d="M33 27c-3 5-7 6-11 6A12.500 12.500 0 1 1 33.500 21H12" stroke="#6fdcf8" strokeWidth="6" />
        <path d="M9 35c-6 4-9-1-4-10C11 13 25 1 34 1c5 0 4 5 2 9" stroke="#f7c52b" strokeWidth="3" />
    </svg>
);

const TASKS: { name: string; open?: string; icon: React.ReactNode }[] = [
    { name: 'File Explorer', open: 'bg-white/45', icon: <FolderIcon /> },
    { name: 'Media Player', icon: <svg width="32" height="32" viewBox="0 0 36 34" className="mr-1"><path d="M10 2l23 2v26l-21 3z" fill="#7fc0e4" stroke="#b5dff2" /><path d="M2 2h24v30l-24-3z" fill="#a3d6ef" stroke="#d5eefa" /><circle cx="14" cy="17" r="11" fill="#f47b20" stroke="#fff" /><path d="M10 10l11 7-11 7z" fill="#fff" /></svg> },
    { name: 'Excel', open: 'bg-white/75', icon: <OfficeIcon letter="X" color="#1f7244"><path d="M22 8h5v3h-5zM28 8h5v3h-5zM22 12h5v3h-5zM28 12h5v3h-5zM22 16h5v3h-5zM28 16h5v3h-5zM22 20h5v3h-5zM28 20h5v3h-5zM22 24h5v3h-5zM28 24h5v3h-5z" fill="#1f7244" /></OfficeIcon> },
    { name: 'PowerPoint', icon: <OfficeIcon letter="P" color="#d24625"><path d="M22 9a6 6 0 1 0 7 7h-6zM25 8v6h6c0-4-3-6-6-6zM22 24h10v2H22zM22 28h10v1H22z" fill="#d24625" /></OfficeIcon> },
    { name: 'Word', icon: <OfficeIcon letter="W" color="#2a5699"><path d="M21 9h11v2H21zM21 13h11v2H21zM21 17h11v2H21zM21 21h11v2H21zM21 25h11v2H21z" fill="#2a5699" /></OfficeIcon> },
    { name: 'Chrome', icon: <ChromeIcon /> },
    { name: 'Internet Explorer', open: 'bg-white/40', icon: <IeIcon /> },
    { name: 'OneNote', icon: <OfficeIcon letter="N" color="#80397b"><path d="M21 9h9v2h-9zM21 14h9v2h-9zM21 19h9v2h-9zM21 24h9v2h-9zM31 6h1v25h-1zM32 12h2v1h-2zM32 19h2v1h-2z" fill="#80397b" /></OfficeIcon> },
    { name: 'Outlook', icon: <svg width="36" height="36" viewBox="0 0 36 36"><path d="M19 7h17v21H19z" fill="#0a6ebd" /><path d="M21 9h13v17H21z" fill="#fff" /><path d="M21 12l6 6 8-9" fill="none" stroke="#0a6ebd" strokeWidth="2" /><path d="M0 4l21-4v36L0 32z" fill="#0a6ebd" /><text x="10" y="25" textAnchor="middle" fontSize="19" fontWeight="700" fill="#fff" fontFamily="'Open Sans', sans-serif">O</text></svg> },
    { name: 'CC3', open: 'bg-white/30', icon: <Cc3 size={40} /> },
];

const Taskbar = () => (
    <nav aria-label="Taskbar" className="relative flex items-center shrink-0 h-12 overflow-hidden border-t border-[#123c5e] bg-[linear-gradient(90deg,#1b5f93_0,#2873a8_70px,#3a93c8_140px,#3f9fd6_420px,#3787c9_560px,#2f7cc4_780px,#2374bb_980px,#1c63a8_1040px,#154a86_1090px,#164880_1200px,#113463_1366px)] text-white">
        <svg width="420" height="48" viewBox="0 0 420 48" preserveAspectRatio="none" className="absolute left-[760px] top-0"><path d="M0 0c110 4 190 26 240 48h-12C170 24 90 8 0 2zM110 0c80 8 130 30 160 48h-20C220 28 170 10 110 0z" fill="#fff" opacity=".18" /></svg>
        <div className="absolute inset-x-0 top-0 h-px bg-white/50" />
        <button type="button" aria-label="Start" className="flex justify-center w-[66px] mr-1 relative"><StartOrb /></button>
        {TASKS.map(t => (
            <button type="button" key={t.name} aria-label={t.name} className="relative shrink-0 w-[70px] h-[47px] px-0.5">
                <span className={clsx('flex items-center justify-center h-full', t.open && 'rounded-sm border border-white/70 outline outline-black/50', t.open)}>{t.icon}</span>
            </button>
        ))}
        <div className="relative flex items-center ml-auto">
            <svg width="9" height="5" viewBox="0 0 9 5" fill="#fff"><path d="M4.500 0L9 5H0z" /></svg>
            <span className="ml-[18px]"><Cc3 size={20} /></span>
            <svg width="18" height="19" viewBox="0 0 18 19" className="ml-3" fill="#fff"><path d="M0 0h2v19H0zM3 1c4-1 4 1 7 1v8c-3 0-4-2-7-1zM11 4c3 1 3 0 7 0l-2 4 1 4c-3 0-3 0-6-1z" /></svg>
            <svg width="19" height="20" viewBox="0 0 19 20" className="ml-[10px]" fill="none" stroke="#fff" strokeWidth="2"><path d="M1 3h10v16H1zM4 1h4" /><path d="M12 5v4c0 3 5 3 5 0V5zM13 5V2M16 5V2M14.500 11v8" strokeWidth="1.500" /><path d="M3 5h6v12H3z" fill="#fff" stroke="none" opacity=".3" /></svg>
            <svg width="16" height="14" viewBox="0 0 16 14" className="ml-[13px]" fill="#fff"><path d="M0 10h2v4H0zM3 8h2v6H3zM6 6h3v8H6zM10 3h2v11h-2zM13 0h3v14h-3z" /></svg>
            <svg width="19" height="18" viewBox="0 0 19 18" className="ml-3" fill="none" stroke="#fff"><path d="M0 6h4l5-6v18l-5-6H0z" fill="#fff" /><path d="M11.500 6v5M14 4c2 3 2 7 0 10M16.500 2c3 4 3 10 0 14" /></svg>
            <div className="w-[98px] pl-4 pr-2 text-sm leading-[22px] text-center"><div>11:51 AM</div><div>5/19/2018</div></div>
            <button type="button" aria-label="Show desktop" className="w-3.5 h-[47px] border border-white/40 bg-linear-to-b from-white/30 to-white/5" />
        </div>
    </nav>
);

const App = () => (
    <div className="flex flex-col h-screen overflow-hidden select-none bg-[#e6e6e6] font-['Noto_Sans','Open_Sans',sans-serif]">
        <Header />
        <Ribbon />
        <FormulaBar />
        <main className="flex flex-1 min-h-0">
            <Sheet />
            <div className="flex flex-col w-[25px] pl-[3px] pt-0.5">
                <ScrollButton label="Scroll up" d="M0 7h9L4.500 2z" />
                <div className="flex-1 w-[19px] pt-2 bg-[#dadada]"><div className="h-[72px] bg-[#f0f0f0] border border-[#ababab]" /></div>
                <ScrollButton label="Scroll down" d="M0 2h9L4.500 7z" />
            </div>
        </main>
        <SheetTabs />
        <StatusBar />
        <Taskbar />
    </div>
);

export default App;
